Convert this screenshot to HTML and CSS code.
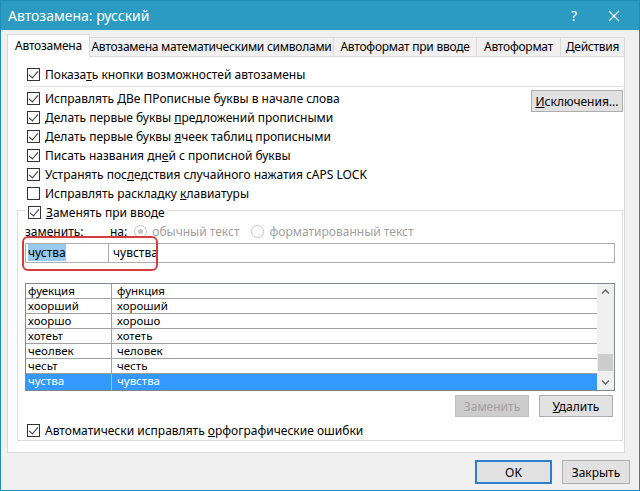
FILE: index.html
```html
<!DOCTYPE html>
<html>
<head>
  <meta charset="utf-8">
  <title>Автозамена</title>
  <link rel="stylesheet" href="styles.css">
</head>
<body>
  <div class="window">
    <div class="titlebar">
      <span class="title">Автозамена: русский</span>
      <span class="help">?</span>
      <svg class="close" width="12" height="12" viewBox="0 0 12 12"><path d="M1 1L11 11M11 1L1 11" stroke="#fff" stroke-width="1.2"/></svg>
    </div>

    <div class="tabs">
      <div class="tab active t1">Автозамена</div>
      <div class="tab t2">Автозамена математическими символами</div>
      <div class="tab t3">Автоформат при вводе</div>
      <div class="tab t4">Автоформат</div>
      <div class="tab t5">Действия</div>
    </div>

    <div class="panel">
      <div class="row"><span class="cb on"></span><span>Показа<u>т</u>ь кнопки возможностей автозамены</span></div>
      <div class="sep"></div>

      <div class="options">
        <div class="opt-list">
          <div class="row"><span class="cb on"></span><span>Исправлять <u>Д</u>Ве ПРописные буквы в начале слова</span></div>
          <div class="row"><span class="cb on"></span><span>Делать первые буквы <u>п</u>редложений прописными</span></div>
          <div class="row"><span class="cb on"></span><span>Делать первые буквы <u>я</u>чеек таблиц прописными</span></div>
          <div class="row"><span class="cb on"></span><span>Писать названия дн<u>е</u>й с прописной буквы</span></div>
          <div class="row"><span class="cb on"></span><span>Устранять пос<u>л</u>едствия случайного нажатия cAPS LOCK</span></div>
          <div class="row"><span class="cb"></span><span>Исправлять раскладку <u>к</u>лавиатуры</span></div>
        </div>
        <button class="btn exc"><u>И</u>сключения...</button>
      </div>

      <div class="group">
        <div class="legend"><span class="cb on"></span><span><u>З</u>аменять при вводе</span></div>
        <div class="labels">
          <span class="lbl-from">заменить:</span>
          <span class="lbl-to">на:</span>
          <span class="radio checked"></span><span class="muted">обычный текст</span>
          <span class="radio"></span><span class="muted">форматированный текст</span>
        </div>
        <div class="entry">
          <div class="field from"><span class="sel">чуства</span></div>
          <div class="field to">чувства</div>
        </div>
        <div class="highlight"></div>

        <div class="list">
          <div class="rows">
            <div class="item"><span>фуекция</span><span>функция</span></div>
            <div class="item"><span>хоорший</span><span>хороший</span></div>
            <div class="item"><span>хооршо</span><span>хорошо</span></div>
            <div class="item"><span>хотеьт</span><span>хотеть</span></div>
            <div class="item"><span>чеолвек</span><span>человек</span></div>
            <div class="item"><span>чесьт</span><span>честь</span></div>
            <div class="item selected"><span>чуства</span><span>чувства</span></div>
          </div>
          <div class="scrollbar">
            <svg width="17" height="16" viewBox="0 0 17 16"><path d="M5 9.5L8.5 6L12 9.5" fill="none" stroke="#606060" stroke-width="1.3"/></svg>
            <div class="track"><div class="thumb"></div></div>
            <svg width="17" height="16" viewBox="0 0 17 16"><path d="M5 6.5L8.5 10L12 6.5" fill="none" stroke="#606060" stroke-width="1.3"/></svg>
          </div>
        </div>

        <div class="list-buttons">
          <button class="btn disabled">Заменить</button>
          <button class="btn"><u>У</u>далить</button>
        </div>

        <div class="row"><span class="cb on"></span><span>Автоматически исправлять <u>о</u>рфографические ошибки</span></div>
      </div>
    </div>

    <div class="footer">
      <button class="btn ok">OK</button>
      <button class="btn close-btn">Закрыть</button>
    </div>
  </div>
</body>
</html>
```

FILE: styles.css
```css
/* Autocorrect dialog */

body {
  margin: 0;
  font-family: "Noto Sans", "Open Sans", sans-serif;
  font-size: 12px;
  color: #000;
}

.window {
  width: 640px;
  height: 491px;
  box-sizing: border-box;
  border: 1px solid #1b8db6;
  background: #f0f0f0;
}

.titlebar {
  height: 29px;
  background: #2b9bc1;
  color: #fff;
  display: flex;
  align-items: center;
  padding-left: 7px;
}

.title {
  font-size: 14px;
  flex: 1;
}

.help {
  font-size: 14px;
  margin-right: 31px;
}

.close {
  margin-right: 19px;
}

.tabs {
  display: flex;
  align-items: flex-end;
  height: 21px;
  margin: 5px 0 0 6px;
  position: relative;
  z-index: 1;
}

.tab {
  height: 18px;
  line-height: 18px;
  box-sizing: content-box;
  border: 1px solid #d9d9d9;
  border-bottom: none;
  margin-left: -1px;
  background: #f0f0f0;
  white-space: nowrap;
  text-align: center;
  letter-spacing: -0.25px;
  overflow: hidden;
}

.tab.active {
  height: 22px;
  line-height: 21px;
  margin-bottom: -1px;
  margin-left: 0;
  background: #fff;
}

.t1 { width: 81px; }
.t2 { width: 243px; }
.t3 { width: 142px; }
.t4 { width: 83px; }
.t5 { width: 63px; }

.panel {
  margin-left: 6px;
  width: 618px;
  height: 397px;
  box-sizing: border-box;
  background: #fff;
  border: 1px solid #d9d9d9;
  padding: 8px 1px 0 9px;
}

.row {
  height: 19px;
  display: flex;
  align-items: center;
  padding-left: 10px;
  white-space: nowrap;
}

.cb {
  width: 11px;
  height: 11px;
  border: 1px solid #333;
  margin-right: 5px;
  flex: none;
  position: relative;
  background: #fff;
}

.cb.on::after {
  content: "";
  position: absolute;
  left: 3px;
  top: 0;
  width: 4px;
  height: 8px;
  border-right: 1px solid #333;
  border-bottom: 1px solid #333;
  transform: rotate(40deg);
}

.sep {
  height: 1px;
  background: #e3e3e3;
  margin: 2px 0 2px 7px;
}

.options {
  display: flex;
  justify-content: space-between;
}

.btn {
  font-family: inherit;
  font-size: 12px;
  background: #e1e1e1;
  border: 1px solid #adadad;
  padding: 0;
  color: #000;
}

.exc {
  width: 92px;
  height: 22px;
  margin-top: 1px;
}

.group {
  position: relative;
  margin-top: 7px;
  height: 231px;
  box-sizing: border-box;
  border: 1px solid #dcdcdc;
  padding-left: 6px;
}

.legend {
  display: flex;
  align-items: center;
  width: fit-content;
  height: 19px;
  margin: -8px 0 0 1px;
  padding: 0 3px;
  background: #fff;
}

.labels {
  height: 18px;
  display: flex;
  align-items: center;
  margin-left: 1px;
}

.lbl-from {
  width: 85px;
}

.lbl-to {
  margin-right: 7px;
}

.radio {
  width: 11px;
  height: 11px;
  border: 1px solid #c4c4c4;
  border-radius: 50%;
  margin-right: 5px;
  position: relative;
}

.radio.checked::after {
  content: "";
  position: absolute;
  left: 3px;
  top: 3px;
  width: 5px;
  height: 5px;
  border-radius: 50%;
  background: #c4c4c4;
}

.muted {
  color: #a0a0a0;
  margin-right: 12px;
}

.entry {
  display: flex;
  margin: 3px 0 0 1px;
  width: 590px;
  height: 20px;
}

.field {
  height: 20px;
  box-sizing: border-box;
  border: 1px solid #adadad;
  line-height: 18px;
  padding-left: 2px;
}

.field.from {
  width: 84px;
}

.field.to {
  flex: 1;
  margin-left: -1px;
  padding-left: 4px;
}

.sel {
  background: #99c9ef;
}

.highlight {
  position: absolute;
  left: 4px;
  top: 25px;
  width: 136px;
  height: 35px;
  box-sizing: border-box;
  border: 2px solid #d43c3f;
  border-radius: 6px;
}

.list {
  display: flex;
  margin: 20px 0 0 1px;
  width: 590px;
  height: 108px;
  box-sizing: border-box;
  border: 1px solid #828790;
}

.rows {
  flex: 1;
}

.item {
  display: flex;
  height: 15px;
  font-size: 11.5px;
  line-height: 14px;
  border-bottom: 1px solid #a0a0a0;
  box-sizing: border-box;
  overflow: hidden;
}

.item span:first-child {
  width: 83px;
  padding-left: 2px;
  border-right: 1px solid #a0a0a0;
}

.item span:last-child {
  padding-left: 5px;
}

.item.selected {
  background: #3399ff;
  color: #fff;
  border-bottom: none;
  height: 16px;
}

.item.selected span:first-child {
  border-right-color: #8cc4ff;
}

.scrollbar {
  width: 17px;
  background: #f0f0f0;
  display: flex;
  flex-direction: column;
}

.track {
  flex: 1;
  position: relative;
}

.thumb {
  position: absolute;
  left: 1px;
  right: 1px;
  bottom: 3px;
  height: 17px;
  background: #cdcdcd;
}

.list-buttons {
  display: flex;
  justify-content: flex-end;
  gap: 10px;
  width: 589px;
  margin-top: 4px;
}

.list-buttons .btn {
  width: 74px;
  height: 22px;
}

.btn.disabled {
  color: #a0a0a0;
  background: #ccc;
  border-color: #bfbfbf;
}

.group .row {
  margin-top: 4px;
  padding-left: 3px;
}

.footer {
  display: flex;
  justify-content: flex-end;
  gap: 10px;
  margin-top: 7px;
  padding-right: 9px;
}

.footer .btn {
  height: 24px;
}

.ok {
  width: 77px;
  border: 2px solid #2b7fce;
}

.close-btn {
  width: 68px;
}
```
